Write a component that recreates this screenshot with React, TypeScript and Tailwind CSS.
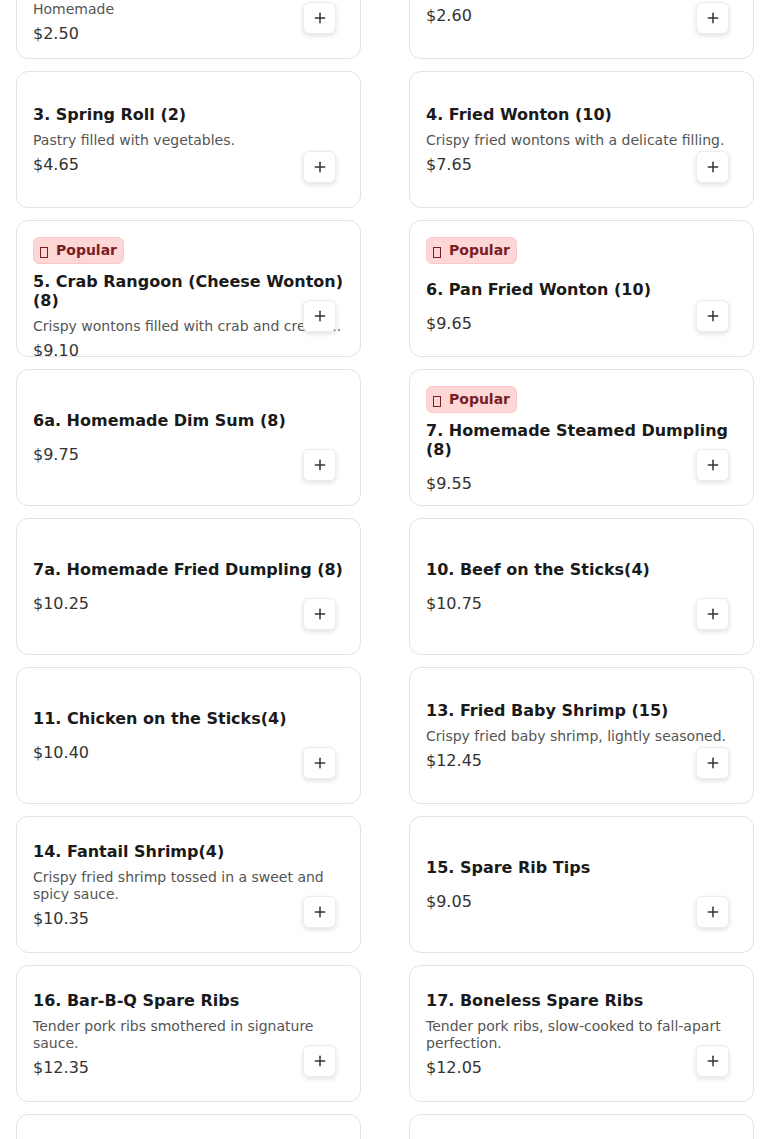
import { Plus } from "lucide-react";

type Item = {
  name: string;
  desc?: string;
  price: string;
  popular?: boolean;
};

const items: Item[] = [
  { name: "1. Egg Roll (1)", desc: "Homemade", price: "$2.50", popular: true },
  { name: "2. Shrimp Egg Roll (1)", desc: "Crispy roll with shrimp and vegetables.", price: "$2.60" },
  { name: "3. Spring Roll (2)", desc: "Pastry filled with vegetables.", price: "$4.65" },
  { name: "4. Fried Wonton (10)", desc: "Crispy fried wontons with a delicate filling.", price: "$7.65" },
  { name: "5. Crab Rangoon (Cheese Wonton) (8)", desc: "Crispy wontons filled with crab and cream...", price: "$9.10", popular: true },
  { name: "6. Pan Fried Wonton (10)", price: "$9.65", popular: true },
  { name: "6a. Homemade Dim Sum (8)", price: "$9.75" },
  { name: "7. Homemade Steamed Dumpling (8)", price: "$9.55", popular: true },
  { name: "7a. Homemade Fried Dumpling (8)", price: "$10.25" },
  { name: "10. Beef on the Sticks(4)", price: "$10.75" },
  { name: "11. Chicken on the Sticks(4)", price: "$10.40" },
  { name: "13. Fried Baby Shrimp (15)", desc: "Crispy fried baby shrimp, lightly seasoned.", price: "$12.45" },
  { name: "14. Fantail Shrimp(4)", desc: "Crispy fried shrimp tossed in a sweet and spicy sauce.", price: "$10.35" },
  { name: "15. Spare Rib Tips", price: "$9.05" },
  { name: "16. Bar-B-Q Spare Ribs", desc: "Tender pork ribs smothered in signature sauce.", price: "$12.35" },
  { name: "17. Boneless Spare Ribs", desc: "Tender pork ribs, slow-cooked to fall-apart perfection.", price: "$12.05" },
  { name: "18. Teriyaki Beef", price: "$11.25" },
  { name: "19. Chicken Wings (8)", price: "$10.95" },
];

function MenuCard({ item }: { item: Item }) {
  return (
    <div className="relative flex h-[137px] flex-col overflow-hidden rounded-xl border border-[#e3e3e3] bg-white px-4 pb-[13px] pt-4">
      {item.popular && (
        <span className="mb-2 flex items-center gap-2 self-start rounded-md border border-[#fbc9c9] bg-[#fdd6d6] py-[3px] pl-[6px] pr-[6px] text-sm font-bold leading-[19px] text-[#7a1f24]">
          {/* missing-glyph box, as the emoji renders in the original */}
          <span className="inline-block h-[11px] w-2 translate-y-0.5 border border-[#7a1f24]" />
          Popular
        </span>
      )}
      {/* title / desc / price block, centred in what is left */}
      <div className="my-auto">
        <h3 className="mb-2 text-base font-bold leading-[19px] text-[#1a1a1a]">{item.name}</h3>
        {item.desc && <p className="text-sm leading-[17px] text-[#555]">{item.desc}</p>}
        {/* margins collapse with the title's when there is no description */}
        <div className={item.desc ? "mt-1 text-base leading-6 text-[#333]" : "mt-[13px] text-base leading-6 text-[#333]"}>
          {item.price}
        </div>
      </div>
      <button className="absolute bottom-6 right-6 flex h-8 w-[33px] items-center justify-center rounded-md border border-[#ececec] bg-white text-[#333] shadow-[0_2px_5px_rgba(0,0,0,0.12)]">
        <Plus size={16} strokeWidth={2.25} />
      </button>
    </div>
  );
}

export default function App() {
  return (
    <div className="min-h-screen overflow-hidden bg-white" style={{ fontFamily: '"DejaVu Sans", sans-serif' }}>
      <div className="-mt-[78px] grid grid-cols-2 gap-x-12 gap-y-3 px-4">
        {items.map((item) => (
          <MenuCard key={item.name} item={item} />
        ))}
      </div>
    </div>
  );
}
